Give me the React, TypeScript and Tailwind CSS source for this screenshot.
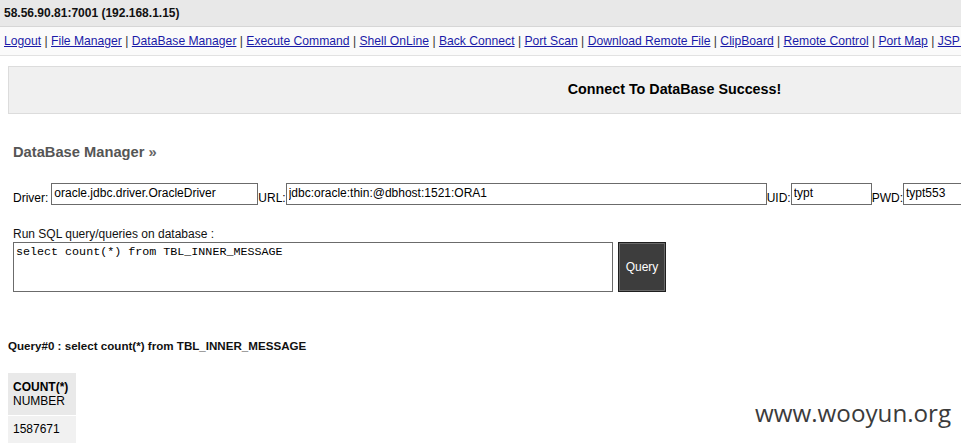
import React from 'react';

const NAV = [
  'Logout',
  'File Manager',
  'DataBase Manager',
  'Execute Command',
  'Shell OnLine',
  'Back Connect',
  'Port Scan',
  'Download Remote File',
  'ClipBoard',
  'Remote Control',
  'Port Map',
  'JSP Env',
];

export default function App() {
  return (
    <div className="relative w-[961px] h-[445px] overflow-hidden bg-white font-['Liberation_Sans',Arial,sans-serif] text-[12px] text-black">
      <div className="w-[1350px]">
        {/* Host bar */}
        <div className="h-[27px] bg-[#e8e8e8] border-b border-[#d6d6d6] px-[4px] flex items-center font-bold text-[#111]">
          58.56.90.81:7001 (192.168.1.15)
        </div>

        {/* Nav */}
        <div className="h-[29px] bg-[#fafafa] border-b border-[#e2e2e2] px-[4px] flex items-center whitespace-pre text-[12.15px]">
          {NAV.map((n, i) => (
            <span key={n}>
              {i > 0 && <span className="text-[#333]">{' | '}</span>}
              <a href="#" className="text-[#1a1aa8] underline">
                {n}
              </a>
            </span>
          ))}
        </div>

        {/* Status panel */}
        <div className="mt-[10px] ml-[8px] w-[1333px] h-[48px] bg-[#f0f0f0] border border-[#dcdcdc] flex items-center justify-center">
          <span className="font-bold text-[14.3px] text-black">Connect To DataBase Success!</span>
        </div>

        <div className="px-[13px]">
          <h2 className="mt-[29px] h-[18px] font-bold text-[14.7px] text-[#555] leading-[18px]">
            DataBase Manager <span className="text-[#666]">»</span>
          </h2>

          {/* Connection form */}
          <div className="mt-[22px] flex items-end whitespace-nowrap">
            <span className="mr-[3px] leading-[14px]">Driver:</span>
            <input
              readOnly
              value="oracle.jdbc.driver.OracleDriver"
              className="w-[207px] h-[22px] border border-[#6b6b6b] px-[2px] pb-[3px] text-[12px] outline-none"
            />
            <span className="leading-[14px]">URL:</span>
            <input
              readOnly
              value="jdbc:oracle:thin:@dbhost:1521:ORA1"
              className="w-[481px] h-[22px] border border-[#6b6b6b] px-[2px] pb-[3px] text-[12px] outline-none"
            />
            <span className="leading-[14px]">UID:</span>
            <input
              readOnly
              value="typt"
              className="w-[81px] h-[22px] border border-[#6b6b6b] px-[2px] pb-[3px] text-[12px] outline-none"
            />
            <span className="leading-[14px]">PWD:</span>
            <input
              readOnly
              value="typt553"
              className="w-[81px] h-[22px] border border-[#6b6b6b] px-[2px] pb-[3px] text-[12px] outline-none"
            />
          </div>

          <div className="mt-[22px] leading-[14px] text-[#111]">Run SQL query/queries on database :</div>
          <div className="mt-[1px] flex items-start gap-[5px]">
            <textarea
              readOnly
              value="select count(*) from TBL_INNER_MESSAGE"
              className="w-[600px] h-[50px] border border-[#6b6b6b] px-[2px] py-[2px] resize-none outline-none font-['Liberation_Mono','Courier_New',monospace] text-[11.7px] leading-[14px]"
            />
            <button className="w-[48px] h-[50px] bg-[#3d3d3d] border border-[#1e1e1e] shadow-[inset_0_0_0_1px_#6a6a6a] text-white text-[12px]">
              Query
            </button>
          </div>
        </div>

        {/* Result */}
        <div className="px-[8px]">
          <div className="mt-[47px] font-bold text-[11.6px] leading-[14px] text-[#111]">
            Query#0 : select count(*) from TBL_INNER_MESSAGE
          </div>
          <table className="mt-[20px] border-collapse">
            <tbody>
              <tr>
                <td className="w-[68px] h-[42px] bg-[#e9e9e9] px-[5px] leading-[14px] align-middle">
                  <div className="font-bold">COUNT(*)</div>
                  <div>NUMBER</div>
                </td>
              </tr>
              <tr>
                <td className="h-[28px] bg-[#f1f1f1] border-t border-white px-[5px] align-middle">1587671</td>
              </tr>
            </tbody>
          </table>
        </div>
      </div>

      {/* Watermark */}
      <div className="absolute left-[755px] top-[397px] font-['Open_Sans',sans-serif] text-[24.2px] leading-[32px] text-[#3b3b3b]">
        www.wooyun.org
      </div>
    </div>
  );
}
